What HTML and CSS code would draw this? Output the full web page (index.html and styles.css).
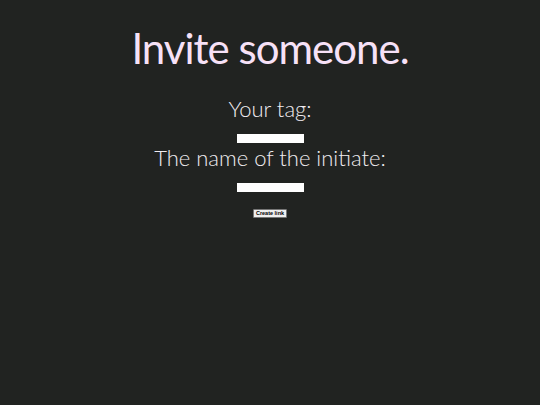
FILE: index.html
```html
<!DOCTYPE html>
<html>
<head>
<meta charset="utf-8">
<link rel="stylesheet" href="styles.css">
</head>
<body>
<main class="page">
  <h1 class="title">Invite someone.</h1>
  <form class="form">
    <label class="label">Your tag:</label>
    <input class="field" type="text">
    <label class="label">The name of the initiate:</label>
    <input class="field" type="text">
    <button class="btn" type="button">Create link</button>
  </form>
</main>
</body>
</html>
```
FILE: styles.css
```css
html, body {
  margin: 0;
  padding: 0;
  background: #212321;
  height: 100%;
}
.page {
  display: flex;
  flex-direction: column;
  align-items: center;
  font-family: "Lato", "Open Sans", sans-serif;
  color: #f0ecf0;
}
.title {
  margin: 24px 0 0;
  font-size: 42px;
  font-weight: 400;
  color: #f7e1f7;
  letter-spacing: -1px;
  line-height: 48px;
}
.form {
  display: flex;
  flex-direction: column;
  align-items: center;
}
.label {
  font-size: 22px;
  font-weight: 300;
  line-height: 26px;
}
.form .label:first-child {
  margin-top: 24px;
}
.form .field + .label {
  margin-top: 2px;
}
.field {
  width: 67px;
  height: 9px;
  box-sizing: border-box;
  border: none;
  background: #ffffff;
  padding: 0;
  margin-top: 12px;
}
.btn {
  margin-top: 17px;
  width: 34px;
  height: 9px;
  padding: 0;
  font-family: "Liberation Sans", sans-serif;
  font-size: 5.5px;
  font-weight: 700;
  line-height: 7px;
  background: #efefef;
  color: #000;
  border: 1px solid #767676;
  border-radius: 1px;
}
```
